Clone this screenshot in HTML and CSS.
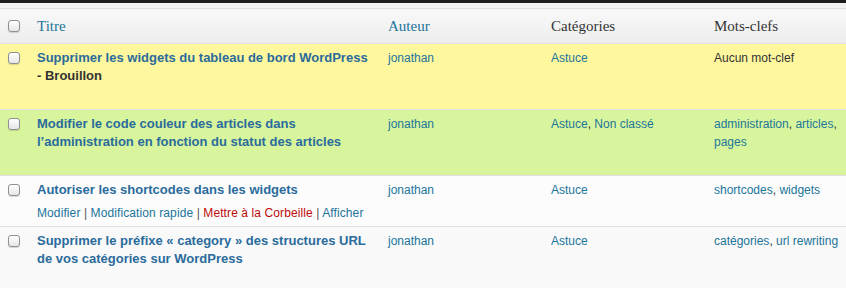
FILE: index.html
```html
<!DOCTYPE html>
<html lang="fr">

<head>
    <meta charset="UTF-8">
    <meta name="viewport" content="width=device-width, initial-scale=1.0">
    <title>Articles</title>
    <link rel="stylesheet" href="styles.css">
</head>

<body>
    <div class="topbar"></div>
    <table class="posts">
        <colgroup>
            <col class="c-cb">
            <col class="c-title">
            <col class="c-author">
            <col class="c-cat">
            <col class="c-tags">
        </colgroup>
        <thead>
            <tr>
                <th class="cb"><input type="checkbox"></th>
                <th><a href="#">Titre</a></th>
                <th><a href="#">Auteur</a></th>
                <th>Catégories</th>
                <th>Mots-clefs</th>
            </tr>
        </thead>
        <tbody>
            <tr class="draft">
                <td class="cb"><input type="checkbox"></td>
                <td>
                    <strong><a class="title" href="#">Supprimer les widgets du tableau de bord WordPress</a> - Brouillon</strong>
                    <div class="row-actions">Modifier</div>
                </td>
                <td><a href="#">jonathan</a></td>
                <td><a href="#">Astuce</a></td>
                <td>Aucun mot-clef</td>
            </tr>
            <tr class="pending">
                <td class="cb"><input type="checkbox"></td>
                <td>
                    <strong><a class="title" href="#">Modifier le code couleur des articles dans l’administration en fonction du statut des articles</a></strong>
                    <div class="row-actions">Modifier</div>
                </td>
                <td><a href="#">jonathan</a></td>
                <td><a href="#">Astuce</a>, <a href="#">Non classé</a></td>
                <td><a href="#">administration</a>, <a href="#">articles</a>, <a href="#">pages</a></td>
            </tr>
            <tr class="hover">
                <td class="cb"><input type="checkbox"></td>
                <td>
                    <strong><a class="title" href="#">Autoriser les shortcodes dans les widgets</a></strong>
                    <div class="row-actions show"><a href="#">Modifier</a> | <a href="#">Modification rapide</a> | <a class="trash" href="#">Mettre à la Corbeille</a> | <a href="#">Afficher</a></div>
                </td>
                <td><a href="#">jonathan</a></td>
                <td><a href="#">Astuce</a></td>
                <td><a href="#">shortcodes</a>, <a href="#">widgets</a></td>
            </tr>
            <tr class="alt">
                <td class="cb"><input type="checkbox"></td>
                <td>
                    <strong><a class="title" href="#">Supprimer le préfixe « category » des structures URL de vos catégories sur WordPress</a></strong>
                    <div class="row-actions">Modifier</div>
                </td>
                <td><a href="#">jonathan</a></td>
                <td><a href="#">Astuce</a></td>
                <td><a href="#">catégories</a>, <a href="#">url rewriting</a></td>
            </tr>
        </tbody>
    </table>
</body>

</html>
```

FILE: styles.css
```css
body {
    margin: 0;
    background: #f9f9f9;
    font-family: "Liberation Sans", Arial, sans-serif;
    font-size: 12px;
    color: #333;
}

a {
    color: #21759b;
    text-decoration: none;
}

.topbar {
    height: 3px;
    background: #1d1d1d;
    border-bottom: 5px solid #f1f1f1;
}

.posts {
    width: 846px;
    border-collapse: collapse;
    table-layout: fixed;
    border-top: 1px solid #dfdfdf;
}

.c-cb { width: 30px; }
.c-title { width: 351px; }
.c-author { width: 163px; }
.c-cat { width: 163px; }

.posts th {
    height: 34px;
    padding: 0 7px;
    text-align: left;
    font-family: "Liberation Serif", Georgia, serif;
    font-size: 15px;
    font-weight: normal;
    color: #333;
    background: linear-gradient(#f9f9f9, #ececec);
    border-bottom: 1px solid #dfdfdf;
}

.posts td {
    padding: 5px 7px 4px;
    vertical-align: top;
    line-height: 18px;
    border-top: 1px solid #fff;
    border-bottom: 1px solid #dfdfdf;
}

.posts th.cb,
.posts td.cb {
    padding: 0 0 0 8px;
}

.posts td.cb {
    padding-top: 8px;
}

input[type="checkbox"] {
    appearance: none;
    display: block;
    margin: 0;
    width: 12px;
    height: 12px;
    border: 1px solid #8f8f8f;
    border-radius: 3px;
    background: linear-gradient(#fff, #e6e6e6);
    box-shadow: 0 1px 1px rgba(0, 0, 0, 0.15);
}

strong {
    font-size: 13px;
    color: #333;
}

.title {
    color: #2a6b9c;
}

.row-actions {
    padding-top: 2px;
    visibility: hidden;
    letter-spacing: 0.1px;
}

.row-actions.show {
    padding-top: 5px;
    visibility: visible;
    color: #555;
}

.row-actions .trash {
    color: #bc0b0b;
}

.draft td { background: #fff79e; }
.pending td { background: #d8f59d; }
.hover td { background: #fcfcfc; }
.alt td { background: #f9f9f9; }
```
